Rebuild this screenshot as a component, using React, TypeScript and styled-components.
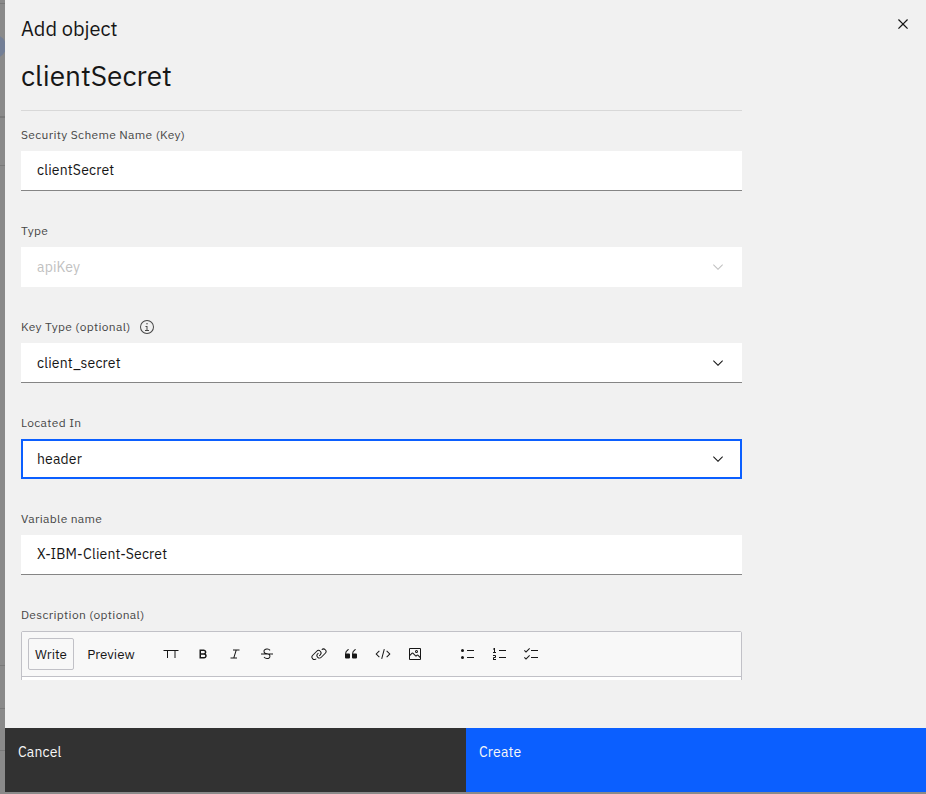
import React from 'react';
import styled, { createGlobalStyle, css } from 'styled-components';

const sans = "'IBM Plex Sans', Roboto, 'Liberation Sans', sans-serif";

const GlobalStyle = createGlobalStyle`
  *, *::before, *::after { box-sizing: border-box; }
  html, body { margin: 0; padding: 0; }
  body { font-family: ${sans}; color: #161616; overflow: hidden; }
`;

const Screen = styled.div`
  display: flex;
  width: 926px;
  height: 794px;
  background: #8a8a8a;
  overflow: hidden;
`;

const Backdrop = styled.div`
  position: relative;
  flex: 0 0 5px;
  overflow: hidden;
`;

const BackdropRule = styled.div<{ $top: number; $thick?: boolean }>`
  position: absolute;
  left: 0;
  right: 0;
  top: ${(p) => p.$top}px;
  height: ${(p) => (p.$thick ? 2 : 1)}px;
  background: #797979;
`;

const BackdropDot = styled.div`
  position: absolute;
  top: 35px;
  left: -17px;
  width: 23px;
  height: 23px;
  border-radius: 50%;
  background: #737f96;
`;

const Panel = styled.section`
  display: flex;
  flex-direction: column;
  flex: 1;
  height: 792px;
  background: #f1f1f1;
`;

const Header = styled.header`
  display: flex;
  justify-content: space-between;
  height: 53px;
  padding: 14px 13px 0 16px;
`;

const Heading = styled.h2`
  margin: 1px 0 0;
  font-size: 20px;
  line-height: 28px;
  font-weight: 400;
`;

const CloseButton = styled.button`
  display: flex;
  width: 20px;
  height: 20px;
  padding: 0;
  border: 0;
  background: none;
  color: #161616;
`;

const Body = styled.main`
  width: 737px;
  height: 627px;
  padding-left: 16px;
  overflow: hidden;
`;

const Title = styled.h1`
  height: 58px;
  margin: 0;
  padding-top: 5px;
  border-bottom: 1px solid #d8d8d8;
  font-size: 28px;
  line-height: 36px;
  font-weight: 400;
`;

const Form = styled.div`
  display: flex;
  flex-direction: column;
  gap: 32px;
  padding-top: 16px;
`;

const Field = styled.div`
  display: flex;
  flex-direction: column;
  gap: 8px;
`;

const Label = styled.label`
  display: flex;
  align-items: center;
  gap: 8px;
  height: 16px;
  font-size: 12px;
  line-height: 16px;
  letter-spacing: 0.32px;
  color: #474747;
  white-space: nowrap;
`;

const Control = styled.div<{ $state?: 'disabled' | 'focus'; $select?: boolean }>`
  display: flex;
  align-items: center;
  justify-content: space-between;
  height: 40px;
  padding: 0 16px ${(p) => (p.$select ? 0 : 2)}px;
  background: #fff;
  border-bottom: 1px solid #858585;
  font-size: 14px;
  line-height: 18px;
  letter-spacing: 0.16px;
  ${(p) => p.$state === 'disabled' && css`
    color: #c1c1c1;
    border-bottom-color: transparent;
  `}
  ${(p) => p.$state === 'focus' && css`
    border: 2px solid #0b5fff;
    padding: 0 14px;
  `}
`;

const Editor = styled.div`
  height: 180px;
  border: 1px solid #c1c1c7;
  border-radius: 2px;
  background: #fff;
`;

const Toolbar = styled.div`
  display: flex;
  align-items: center;
  height: 45px;
  padding-left: 6px;
  background: #f8f8f8;
  border-bottom: 1px solid #c1c1c7;
`;

const ModeTab = styled.button<{ $active?: boolean }>`
  width: ${(p) => (p.$active ? 46 : 62)}px;
  height: 32px;
  margin-right: ${(p) => (p.$active ? 6 : 13)}px;
  padding: 0 0 1px;
  border: 1px solid ${(p) => (p.$active ? '#c1c1c7' : 'transparent')};
  border-radius: 2px;
  background: none;
  color: #161616;
  font: 400 13.333px/18px ${sans};
`;

const ToolGroup = styled.div`
  display: flex;
  margin-right: 20px;
`;

const Tool = styled.button`
  display: flex;
  align-items: center;
  justify-content: center;
  width: 32px;
  height: 32px;
  padding: 0;
  border: 0;
  background: none;
  color: #161616;
`;

const Footer = styled.footer`
  display: flex;
  height: 64px;
  margin-top: auto;
`;

const Action = styled.button<{ $primary?: boolean }>`
  flex: 0 0 ${(p) => (p.$primary ? 460 : 461)}px;
  padding: 15px 13px;
  display: flex;
  align-items: flex-start;
  border: 0;
  background: ${(p) => (p.$primary ? '#0b5fff' : '#323232')};
  color: #f7f7f7;
  font: 400 14px/18px ${sans};
  letter-spacing: 0.16px;
`;

const glyphs = {
  close: 'M24 9.4 22.6 8 16 14.6 9.4 8 8 9.4 14.6 16 8 22.6 9.4 24 16 17.4 22.6 24 24 22.6 17.4 16z',
  chevron: 'M16 22 6 12 7.4 10.6 16 19.2 24.6 10.6 26 12z',
  info: 'M17 22v-8h-4v2h2v6h-3v2h8v-2zM16 8a1.5 1.5 0 1 0 1.5 1.5A1.5 1.5 0 0 0 16 8zM16 30a14 14 0 1 1 14-14 14 14 0 0 1-14 14zm0-26a12 12 0 1 0 12 12A12 12 0 0 0 16 4z',
  heading: 'M1 8v2h7v14h2V10h7V8zM17 8v2h6v14h2V10h6V8z',
  bold: 'M18.25 25H9V7h8.5a5.25 5.25 0 0 1 4 8.65A5.25 5.25 0 0 1 18.25 25zM12 22h6.23a2.25 2.25 0 1 0 0-4.5H12zm0-7.5h5.5a2.25 2.25 0 1 0 0-4.5H12z',
  italic: 'M25 9V7H12v2h5.14l-4.37 14H7v2h13v-2h-5.14l4.37-14z',
  strike: 'M28 15H17.96c-.56-.14-1.12-.27-1.65-.39C12.97 13.82 11 13.29 11 10.5a2.9 2.9 0 0 1 .87-2.18A6.09 6.09 0 0 1 16 7c2.87-.07 4.2.9 5.28 2.38l1.62-1.18A7.65 7.65 0 0 0 16 5a7.93 7.93 0 0 0-5.52 1.9A4.86 4.86 0 0 0 9 10.5 4.9 4.9 0 0 0 11.18 15H4v2h13.65c1.96.57 3.14 1.32 3.17 3.36a3.27 3.27 0 0 1-.98 2.53A5.83 5.83 0 0 1 16 24a6.5 6.5 0 0 1-5.23-2.61l-1.54 1.28A8.36 8.36 0 0 0 16 26h.1a7.67 7.67 0 0 0 5.14-1.69 5.2 5.2 0 0 0 1.58-3.98A4.94 4.94 0 0 0 21.65 17H28z',
  link: 'M29.25 6.76a6 6 0 0 0-8.5 0l1.42 1.42a4 4 0 1 1 5.67 5.67l-8 8a4 4 0 1 1-5.67-5.66l1.41-1.42-1.41-1.42-1.42 1.42a6 6 0 0 0 0 8.5A6 6 0 0 0 17 25a6 6 0 0 0 4.27-1.76l8-8a6 6 0 0 0-.02-8.48zM4.19 24.82a4 4 0 0 1 0-5.67l8-8a4 4 0 0 1 5.67 0A3.94 3.94 0 0 1 19 14a4 4 0 0 1-1.17 2.85L15.71 19l1.42 1.42 2.12-2.12a6 6 0 0 0-8.51-8.51l-8 8a6 6 0 0 0 0 8.51A6 6 0 0 0 7 28a6.07 6.07 0 0 0 4.28-1.76L9.86 24.82a4 4 0 0 1-5.67 0z',
  quote: 'M12 15H6.11A9 9 0 0 1 10 8.86l1.79-1.2L10.69 6 8.9 7.2A11 11 0 0 0 4 16.35V23a2 2 0 0 0 2 2h6a2 2 0 0 0 2-2v-6a2 2 0 0 0-2-2zM26 15h-5.89A9 9 0 0 1 24 8.86l1.79-1.2L24.7 6l-1.8 1.2A11 11 0 0 0 18 16.35V23a2 2 0 0 0 2 2h6a2 2 0 0 0 2-2v-6a2 2 0 0 0-2-2z',
  code: 'M31 16 24 23 22.59 21.59 28.17 16 22.59 10.41 24 9zM1 16 8 9 9.41 10.41 3.83 16 9.41 21.59 8 23zM12.42 25.48 17.64 6 19.57 6.52 14.35 26z',
  image: 'M19 14a3 3 0 1 0-3-3 3 3 0 0 0 3 3zm0-4a1 1 0 1 1-1 1 1 1 0 0 1 1-1zM26 4H6a2 2 0 0 0-2 2v20a2 2 0 0 0 2 2h20a2 2 0 0 0 2-2V6a2 2 0 0 0-2-2zm0 22H6v-6l5-5 5.59 5.59a2 2 0 0 0 2.82 0L21 19l5 5zm0-4.83-3.59-3.59a2 2 0 0 0-2.82 0L18 19.17l-5.59-5.59a2 2 0 0 0-2.82 0L6 17.17V6h20z',
  bullets: 'M7 6a3 3 0 1 0 0 6 3 3 0 0 0 0-6zM7 20a3 3 0 1 0 0 6 3 3 0 0 0 0-6zM16 22h14v2H16zM16 8h14v2H16z',
  numbers: 'M16 22h14v2H16zM16 8h14v2H16zM8 12V4H6v1H4v2h2v5H4v2h6v-2zM10 28H4v-4a2 2 0 0 1 2-2h2v-2H4v-2h4a2 2 0 0 1 2 2v2a2 2 0 0 1-2 2H6v2h4z',
  checks: 'M16 8h14v2H16zM6 10.59 3.41 8 2 9.41l4 4 8-8L12.59 4zM16 22h14v2H16zM6 24.59 3.41 22 2 23.41l4 4 8-8L12.59 18z',
};

type GlyphName = keyof typeof glyphs;

const Glyph = ({ name, size = 16 }: { name: GlyphName; size?: number }) => (
  <svg width={size} height={size} viewBox="0 0 32 32" fill="currentColor" aria-hidden="true">
    <path d={glyphs[name]} />
  </svg>
);

interface FieldSpec {
  label: string;
  value: string;
  select?: boolean;
  info?: boolean;
  state?: 'disabled' | 'focus';
}

const fields: FieldSpec[] = [
  { label: 'Security Scheme Name (Key)', value: 'clientSecret' },
  { label: 'Type', value: 'apiKey', select: true, state: 'disabled' },
  { label: 'Key Type (optional)', value: 'client_secret', select: true, info: true },
  { label: 'Located In', value: 'header', select: true, state: 'focus' },
  { label: 'Variable name', value: 'X-IBM-Client-Secret' },
];

const toolGroups: GlyphName[][] = [
  ['heading', 'bold', 'italic', 'strike'],
  ['link', 'quote', 'code', 'image'],
  ['bullets', 'numbers', 'checks'],
];

export default function App() {
  return (
    <>
      <GlobalStyle />
      <Screen>
        <Backdrop>
          <BackdropRule $top={3} />
          <BackdropDot />
          <BackdropRule $top={116} $thick />
          <BackdropRule $top={165} />
          <BackdropRule $top={665} />
          <BackdropRule $top={708} />
          <BackdropRule $top={750} />
        </Backdrop>
        <Panel>
          <Header>
            <Heading>Add object</Heading>
            <CloseButton aria-label="Close"><Glyph name="close" size={20} /></CloseButton>
          </Header>
          <Body>
            <Title>clientSecret</Title>
            <Form>
              {fields.map((f) => (
                <Field key={f.label}>
                  <Label>
                    {f.label}
                    {f.info && <Glyph name="info" />}
                  </Label>
                  <Control $state={f.state} $select={f.select}>
                    {f.value}
                    {f.select && <Glyph name="chevron" />}
                  </Control>
                </Field>
              ))}
              <Field>
                <Label>Description (optional)</Label>
                <Editor>
                  <Toolbar>
                    <ModeTab $active>Write</ModeTab>
                    <ModeTab>Preview</ModeTab>
                    {toolGroups.map((group) => (
                      <ToolGroup key={group[0]}>
                        {group.map((name) => (
                          <Tool key={name} aria-label={name}><Glyph name={name} /></Tool>
                        ))}
                      </ToolGroup>
                    ))}
                  </Toolbar>
                </Editor>
              </Field>
            </Form>
          </Body>
          <Footer>
            <Action>Cancel</Action>
            <Action $primary>Create</Action>
          </Footer>
        </Panel>
      </Screen>
    </>
  );
}
